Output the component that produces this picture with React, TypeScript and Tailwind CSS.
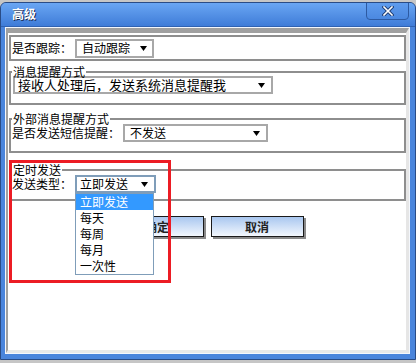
import React from 'react';

const Arrow = () => (
  <svg width="7" height="5" viewBox="0 0 7 5" className="shrink-0">
    <polygon points="0,0 7,0 3.5,5" fill="#000" />
  </svg>
);

const menuItems = ['立即发送', '每天', '每周', '每月', '一次性'];

export default function App() {
  return (
    <div className="relative w-[416px] h-[363px] bg-[#c6c6c6] pt-[2px] font-['Noto_Sans_CJK_SC','Noto_Sans',sans-serif] text-[12px] text-black">
      {/* window */}
      <div className="w-[416px] h-[358px] rounded-t-[6px] border border-[#2a4c86] bg-[#4a85dc] flex flex-col overflow-hidden">
        {/* title bar */}
        <div className="h-[24px] shrink-0 flex items-start justify-between bg-gradient-to-b from-[#6aa6f3] to-[#3f7cd8] border-b border-[#2f62b2]">
          <span className="ml-[11px] mt-[4px] text-[12px] leading-[14px] font-bold text-white [text-shadow:1px_1px_0_#1b2d55]">高级</span>
          <div className="mr-[6px] w-[43px] h-[18px] -mt-px rounded-b-[4px] border border-[#2d5aa2] bg-gradient-to-b from-[#5f9cee] to-[#4b88e0] flex items-center justify-center">
            <svg width="12" height="10" viewBox="0 0 12 10">
              <path d="M2 1 L10 9 M10 1 L2 9" stroke="#1f3d73" strokeWidth="3.4" strokeLinecap="square" />
              <path d="M2 1 L10 9 M10 1 L2 9" stroke="#fff" strokeWidth="1.6" strokeLinecap="square" />
            </svg>
          </div>
        </div>

        {/* body */}
        <div className="flex-1 pl-[4px] pr-[5px] pb-[5px]">
          <div className="h-full border border-[#f4f7fc]">
            <div className="h-full bg-white border-t-[5px] border-l-2 border-r-[3px] border-b-[3px] border-t-[#a0a0a0] border-l-[#a0a0a0] border-r-[#e6e6e6] border-b-[#e8e8e8] pl-px">
              {/* row 1 */}
              <div className="mt-[2px] w-[397px] h-[26px] border-2 border-[#8e8e8e] flex items-center">
                <span className="w-[64px] pl-px leading-[14px]">是否跟踪：</span>
                <div className="w-[79px] h-[19px] border-2 border-[#a8a8a8] bg-white flex items-center justify-between pl-[5px] pr-[5px]">
                  <span className="leading-[14px]">自动跟踪</span>
                  <Arrow />
                </div>
              </div>

              {/* 消息提醒方式 */}
              <fieldset className="mt-[4px] w-[397px] border-2 border-[#8e8e8e] pb-[9px]">
                <legend className="ml-px px-px leading-[13px]">消息提醒方式</legend>
                <div className="-mt-[2px] ml-[2px] w-[260px] h-[18px] border-2 border-[#a8a8a8] flex items-center justify-between pl-[3px] pr-[6px]">
                  <span className="text-[13px] leading-[14px]">接收人处理后，发送系统消息提醒我</span>
                  <Arrow />
                </div>
              </fieldset>

              {/* 外部消息提醒方式 */}
              <fieldset className="mt-[7px] w-[397px] border-2 border-[#8e8e8e] pb-[9px]">
                <legend className="ml-px px-px leading-[13px]">外部消息提醒方式</legend>
                <div className="-mt-px flex items-center">
                  <span className="w-[112px] pl-px leading-[14px]">是否发送短信提醒：</span>
                  <div className="w-[145px] h-[18px] border-2 border-[#a8a8a8] flex items-center justify-between pl-[5px] pr-[6px]">
                    <span className="leading-[14px]">不发送</span>
                    <Arrow />
                  </div>
                </div>
              </fieldset>

              {/* 定时发送 */}
              <fieldset className="mt-[10px] w-[397px] border-2 border-[#8e8e8e] pb-[6px]">
                <legend className="ml-px px-px leading-[13px]">定时发送</legend>
                <div className="-mt-px flex items-center">
                  <span className="w-[64px] pl-px leading-[14px]">发送类型：</span>
                  <div className="w-[81px] h-[18px] border-2 border-[#7f9db9] flex items-center justify-between pl-[3px] pr-[6px]">
                    <span className="leading-[14px]">立即发送</span>
                    <Arrow />
                  </div>
                </div>
              </fieldset>

              {/* buttons */}
              <div className="mt-[15px] flex justify-center gap-[7px] pr-px">
                <button className="w-[93px] h-[21px] border border-[#1a1a1a] bg-gradient-to-b from-[#a9c7ef] to-[#f3f7fd] shadow-[2px_2px_0_#8a8a8a] font-bold text-[12px] text-[#222] leading-[14px]">确定</button>
                <button className="w-[93px] h-[21px] border border-[#1a1a1a] bg-gradient-to-b from-[#a9c7ef] to-[#f3f7fd] shadow-[2px_2px_0_#8a8a8a] font-bold text-[12px] text-[#222] leading-[14px]">取消</button>
              </div>
            </div>
          </div>
        </div>
      </div>

      {/* open dropdown list */}
      <div className="absolute left-[75px] top-[193px] w-[79px] h-[82px] border border-[#7f9db9] bg-white">
        {menuItems.map((item, i) => (
          <div
            key={item}
            className={i === 0 ? 'h-[16px] pl-[4px] leading-[16px] bg-[#3399ff] text-white' : 'h-[16px] pl-[4px] leading-[16px]'}
          >
            {item}
          </div>
        ))}
      </div>

      {/* red highlight */}
      <div className="absolute left-[9px] top-[160px] w-[162px] h-[123px] border-[3px] border-[#ec1c24]" />
    </div>
  );
}
